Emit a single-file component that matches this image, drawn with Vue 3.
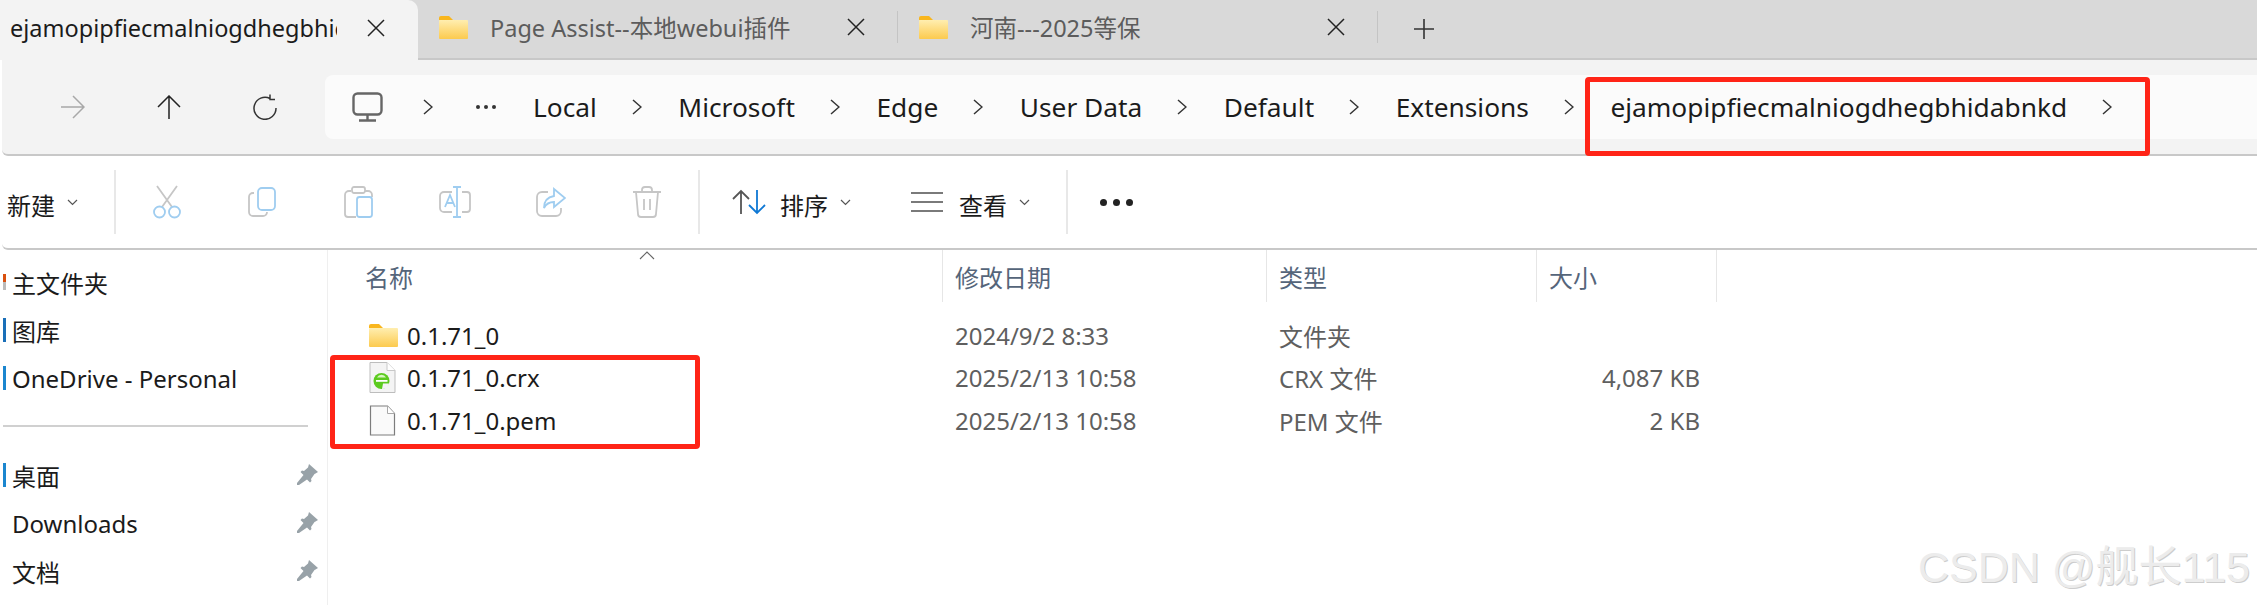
<script setup>
const crumbs = ['Local', 'Microsoft', 'Edge', 'User Data', 'Default', 'Extensions', 'ejamopipfiecmalniogdhegbhidabnkd']

const sidebarTop = [
  { label: '主文件夹', mark: 'orange' },
  { label: '图库', mark: 'blue' },
  { label: 'OneDrive - Personal', mark: 'sky' },
]
const sidebarPinned = [
  { label: '桌面', mark: 'sky' },
  { label: 'Downloads', mark: '' },
  { label: '文档', mark: '' },
]

const files = [
  { name: '0.1.71_0', icon: 'folder', date: '2024/9/2 8:33', type: '文件夹', size: '' },
  { name: '0.1.71_0.crx', icon: 'crx', date: '2025/2/13 10:58', type: 'CRX 文件', size: '4,087 KB' },
  { name: '0.1.71_0.pem', icon: 'blank', date: '2025/2/13 10:58', type: 'PEM 文件', size: '2 KB' },
]
</script>

<template>
  <div class="explorer">
    <!-- tabs -->
    <div class="tabs">
      <div class="tab tab--active">
        <span class="tab__title tab__title--clip">ejamopipfiecmalniogdhegbhidabnkd</span>
        <svg class="tab__close" width="18" height="18" viewBox="0 0 18 18"><path d="M1 1l16 16M17 1L1 17" stroke="#222" stroke-width="1.5" /></svg>
      </div>
      <div class="tab">
        <svg class="folder" width="29" height="23" viewBox="0 0 29 23">
          <path d="M0 2a2 2 0 0 1 2-2h8l4 4h-14z" fill="#f9b61d" />
          <rect y="4" width="29" height="19" rx="1" fill="url(#fg1)" />
          <defs><linearGradient id="fg1" x1="0" y1="0" x2="0" y2="1"><stop offset="0" stop-color="#ffeeb0" /><stop offset="1" stop-color="#fcca4e" /></linearGradient></defs>
        </svg>
        <span class="tab__title">Page Assist--本地webui插件</span>
        <svg class="tab__close" width="18" height="18" viewBox="0 0 18 18"><path d="M1 1l16 16M17 1L1 17" stroke="#222" stroke-width="1.5" /></svg>
      </div>
      <div class="tab">
        <svg class="folder" width="29" height="23" viewBox="0 0 29 23">
          <path d="M0 2a2 2 0 0 1 2-2h8l4 4h-14z" fill="#f9b61d" />
          <rect y="4" width="29" height="19" rx="1" fill="url(#fg1)" />
        </svg>
        <span class="tab__title">河南---2025等保</span>
        <svg class="tab__close" width="18" height="18" viewBox="0 0 18 18"><path d="M1 1l16 16M17 1L1 17" stroke="#222" stroke-width="1.5" /></svg>
      </div>
      <svg class="tab-plus" width="22" height="22" viewBox="0 0 22 22"><path d="M11 1v20M1 11h20" stroke="#333" stroke-width="1.6" /></svg>
    </div>

    <!-- address bar -->
    <div class="address">
      <div class="nav">
        <button class="nav__btn">
          <svg width="24" height="24" viewBox="0 0 24 24" fill="none" stroke="#a8a8a8" stroke-width="1.5"><path d="M0 12h23M12 1l11 11-11 11" /></svg>
        </button>
        <button class="nav__btn">
          <svg width="24" height="24" viewBox="0 0 24 24" fill="none" stroke="#222" stroke-width="1.5"><path d="M12 24V1M1 12L12 1l11 11" /></svg>
        </button>
        <button class="nav__btn">
          <svg width="24" height="26" viewBox="0 0 24 26" fill="none" stroke="#333" stroke-width="1.5"><path d="M17 4.500A11 11 0 1 0 23 14M17 .500v5h5" /></svg>
        </button>
      </div>
      <div class="crumbs">
        <svg class="crumbs__pc" width="31" height="30" viewBox="0 0 31 30" fill="none" stroke="#666" stroke-width="2.400"><rect x="1.500" y="1.500" width="28" height="21" rx="4" /><path d="M15.500 23v5M7 28.500h17" /></svg>
        <svg class="chev chev--first" width="10" height="16" viewBox="0 0 10 16" fill="none" stroke="#333" stroke-width="1.500"><path d="M1 1l8 7-8 7" /></svg>
        <span class="crumbs__more"><i></i><i></i><i></i></span>
        <template v-for="(crumb, i) in crumbs" :key="crumb">
          <span class="crumb">{{ crumb }}</span>
          <svg class="chev" width="10" height="16" viewBox="0 0 10 16" fill="none" stroke="#333" stroke-width="1.500"><path d="M1 1l8 7-8 7" /></svg>
        </template>
      </div>
    </div>

    <!-- command bar -->
    <div class="commands">
      <div class="cmd-new">
        <span class="cmd-label">新建</span>
        <svg class="small-chev" width="11" height="7" viewBox="0 0 11 7" fill="none" stroke="#555" stroke-width="1.200"><path d="M1 1l4.500 4.500L10 1" /></svg>
      </div>
      <i class="cmd-sep"></i>
      <button class="cmd-icon">
        <svg width="30" height="34" viewBox="0 0 30 34" fill="none" stroke-width="1.800">
          <path d="M5 1l15 21M25 1L10 22" stroke="#c6c6c6" />
          <circle cx="7.500" cy="27" r="5.500" stroke="#9fcdf0" />
          <circle cx="22.500" cy="27" r="5.500" stroke="#9fcdf0" />
        </svg>
      </button>
      <button class="cmd-icon">
        <svg width="30" height="30" viewBox="0 0 30 30" fill="none" stroke-width="1.800">
          <path d="M6 6h-1a4 4 0 0 0-4 4v15a4 4 0 0 0 4 4h10a4 4 0 0 0 4-4" stroke="#c6c6c6" />
          <rect x="10" y="1" width="17" height="22" rx="4" stroke="#9fcdf0" />
        </svg>
      </button>
      <button class="cmd-icon">
        <svg width="30" height="32" viewBox="0 0 30 32" fill="none" stroke-width="1.800">
          <path d="M7 5h-2a4 4 0 0 0-4 4v19a3 3 0 0 0 3 3h8M21 5h3a4 4 0 0 1 4 4v2" stroke="#c6c6c6" />
          <rect x="8" y="1" width="13" height="6" rx="2" stroke="#c6c6c6" />
          <rect x="13" y="11" width="15" height="20" rx="2.500" stroke="#9fcdf0" />
        </svg>
      </button>
      <button class="cmd-icon">
        <svg width="32" height="32" viewBox="0 0 32 32" fill="none" stroke-width="1.800">
          <path d="M13 6h-8a4 4 0 0 0-4 4v12a4 4 0 0 0 4 4h8M23 6h5a3 3 0 0 1 3 3v14a3 3 0 0 1-3 3h-5" stroke="#c6c6c6" />
          <path d="M14 1h8M18 1v30M14 31h8" stroke="#9fcdf0" />
          <path d="M6 21l5-12 5 12M8 17h6" stroke="#9fcdf0" />
        </svg>
      </button>
      <button class="cmd-icon">
        <svg width="30" height="30" viewBox="0 0 30 30" fill="none" stroke-width="1.800">
          <path d="M12 5h-6a5 5 0 0 0-5 5v14a5 5 0 0 0 5 5h14a5 5 0 0 0 5-5v-3" stroke="#c6c6c6" />
          <path d="M18 2l11 9-11 9v-5c-5 0-8 2-10 6 0-7 4-11 10-12z" stroke="#9fcdf0" />
        </svg>
      </button>
      <button class="cmd-icon">
        <svg width="30" height="32" viewBox="0 0 30 32" fill="none" stroke="#c6c6c6" stroke-width="1.800">
          <path d="M1 6h28M10 6V4a3 3 0 0 1 3-3h4a3 3 0 0 1 3 3v2M4 6l2 22a3 3 0 0 0 3 3h12a3 3 0 0 0 3-3l2-22M12 13v11M18 13v11" />
        </svg>
      </button>
      <i class="cmd-sep cmd-sep--b"></i>
      <div class="cmd-sort">
        <svg width="42" height="26" viewBox="0 0 42 26" fill="none" stroke-width="1.800">
          <path d="M9 25V2M1 10l8-8 8 8" stroke="#555" />
          <path d="M25 1v23M17 16l8 8 8-8" stroke="#0f78d4" />
        </svg>
        <span class="cmd-label">排序</span>
        <svg class="small-chev" width="11" height="7" viewBox="0 0 11 7" fill="none" stroke="#555" stroke-width="1.200"><path d="M1 1l4.500 4.500L10 1" /></svg>
      </div>
      <div class="cmd-view">
        <svg width="32" height="22" viewBox="0 0 32 22" fill="none" stroke="#7a7a7a" stroke-width="2.200"><path d="M0 2h32M0 11h32M0 20h32" /></svg>
        <span class="cmd-label">查看</span>
        <svg class="small-chev" width="11" height="7" viewBox="0 0 11 7" fill="none" stroke="#555" stroke-width="1.200"><path d="M1 1l4.500 4.500L10 1" /></svg>
      </div>
      <i class="cmd-sep cmd-sep--c"></i>
      <div class="cmd-dots"><i></i><i></i><i></i></div>
    </div>

    <div class="body">
      <!-- sidebar -->
      <aside class="side">
        <div v-for="item in sidebarTop" :key="item.label" class="side__row">
          <i class="side__mark" :class="item.mark"></i>
          <span>{{ item.label }}</span>
        </div>
        <div class="side__divider"></div>
        <div v-for="item in sidebarPinned" :key="item.label" class="side__row">
          <i class="side__mark" :class="item.mark"></i>
          <span>{{ item.label }}</span>
          <svg class="pin" width="22" height="22" viewBox="0 0 22 22" fill="#98a2a8">
            <path d="M13 0l9 8-2.500 1.500-1 .500-3.500 5 .5 2-1.500 1.500-3-3L3 21 1 21l0-2 6.500-8-3-3L6 6.500l2 .5 4-3.500z" />
          </svg>
        </div>
      </aside>

      <!-- file list -->
      <section class="list">
        <div class="list__head">
          <div class="col col--name">名称</div>
          <div class="col">修改日期</div>
          <div class="col">类型</div>
          <div class="col col--last">大小</div>
          <svg class="sort-caret" width="16" height="9" viewBox="0 0 16 9" fill="none" stroke="#666" stroke-width="1.100"><path d="M1 8l7-7 7 7" /></svg>
        </div>
        <div v-for="file in files" :key="file.name" class="row">
          <div class="row__name">
            <span class="row__icon">
              <svg v-if="file.icon === 'folder'" width="29" height="23" viewBox="0 0 29 23">
                <path d="M0 2a2 2 0 0 1 2-2h8l4 4h-14z" fill="#f9b61d" />
                <rect y="4" width="29" height="19" rx="1" fill="url(#fg1)" />
              </svg>
              <svg v-else-if="file.icon === 'crx'" width="27" height="31" viewBox="0 0 27 31">
                <path d="M1 .500h17l8 8v22h-25z" fill="#f4f4f4" stroke="#bdbdbd" />
                <path d="M18 .500v8h8" fill="#fff" stroke="#c8c8c8" />
                <circle cx="12.500" cy="19" r="8" fill="#5ccb1f" />
                <path d="M8 15.500a5 5 0 0 1 9 0z" fill="#d9f5c4" />
                <path d="M7 18h11.500v1.800h-11.500z" fill="#fff" />
                <path d="M14 21.500h6.500l-2.500 5-5 .5z" fill="#f4f4f4" />
              </svg>
              <svg v-else width="27" height="31" viewBox="0 0 27 31">
                <path d="M1.500 1h17l7 7.500v21.500h-24z" fill="#fafafa" stroke="#7d7d7d" stroke-width="1.200" />
                <path d="M18.500 1v7.500h7" fill="#fff" stroke="#a8a8a8" />
              </svg>
            </span>
            <span class="row__title">{{ file.name }}</span>
          </div>
          <div class="row__cell">{{ file.date }}</div>
          <div class="row__cell">{{ file.type }}</div>
          <div class="row__cell row__cell--size">{{ file.size }}</div>
        </div>
      </section>
    </div>

    <!-- red annotation boxes and watermark sit on top of the screenshot -->
    <div class="mark-box mark-box--path"></div>
    <div class="mark-box mark-box--files"></div>
    <div class="watermark">CSDN @舰长115</div>
  </div>
</template>

<style scoped>
.explorer {
  position: relative;
  width: 2257px;
  height: 605px;
  overflow: hidden;
  background: #fff;
  font-family: "Noto Sans", "Noto Sans CJK SC", sans-serif;
  color: #1b1b1b;
}

button {
  border: 0;
  padding: 0;
  background: none;
  display: flex;
  align-items: center;
  justify-content: center;
}

.tabs {
  display: flex;
  align-items: center;
  height: 60px;
  background: #d9d9d9;
  border-bottom: 2px solid #c8c8c8;
  box-sizing: border-box;
}
.tab {
  position: relative;
  display: flex;
  align-items: center;
  box-sizing: border-box;
  width: 480px;
  height: 58px;
  padding: 0 33px 4px 21px;
  color: #5c5c5c;
}
.tab::after {
  content: "";
  position: absolute;
  right: 0;
  top: 11px;
  bottom: 15px;
  width: 1px;
  background: #c4c4c4;
}
.tab--active {
  width: 418px;
  height: 60px;
  margin-bottom: -2px;
  padding-left: 10px;
  background: #f3f3f3;
  border-top-right-radius: 10px;
  color: #1b1b1b;
}
.tab--active::after {
  display: none;
}
.tab__title {
  flex: 1;
  margin-left: 22px;
  white-space: nowrap;
  font-size: 23.500px;
}
.tab__title--clip {
  flex: none;
  width: 327px;
  margin-left: 0;
  overflow: hidden;
}
.tab__close {
  flex: none;
  margin-left: auto;
}
.folder {
  flex: none;
}
.tab-plus {
  margin: 0 0 0 35px;
}

.address {
  display: flex;
  height: 96px;
  box-sizing: border-box;
  margin-left: 2px;
  padding-top: 15px;
  background: #f3f3f3;
  border-bottom: 2px solid #c8c8c8;
  border-bottom-left-radius: 6px;
}
.nav {
  display: flex;
  flex: none;
  width: 323px;
  height: 64px;
  padding-left: 23px;
  box-sizing: border-box;
}
.nav__btn {
  width: 96px;
  height: 64px;
}
.crumbs {
  display: flex;
  flex: 1;
  align-items: center;
  height: 64px;
  padding-left: 27px;
  background: #fbfbfb;
  border-radius: 8px 0 0 8px;
  font-size: 26.300px;
  white-space: nowrap;
}
.crumbs__pc {
  flex: none;
}
.chev {
  flex: none;
  margin: 0 36.500px 0 35px;
}
.chev--first {
  margin: 0 0 0 40px;
}
.crumbs__more {
  display: flex;
  gap: 4px;
  margin: 0 37px 0 43px;
}
.crumbs__more i {
  width: 4px;
  height: 4px;
  border-radius: 50%;
  background: #333;
}

.commands {
  display: flex;
  align-items: center;
  height: 94px;
  margin-left: 2px;
  box-sizing: border-box;
  border-bottom: 2px solid #c8c8c8;
  border-bottom-left-radius: 6px;
  font-size: 24px;
}
.cmd-label {
  position: relative;
  top: 2px;
  font-size: 24px;
}
.cmd-new {
  display: flex;
  align-items: center;
  width: 112px;
  padding-left: 5px;
  box-sizing: border-box;
}
.small-chev {
  margin-left: 12px;
}
.cmd-sep {
  flex: none;
  width: 2px;
  height: 64px;
  background: #e8e8e8;
}
.cmd-sep--b {
  margin-left: 3px;
}
.cmd-sep--c {
  margin-left: 36px;
}
.cmd-icon {
  flex: none;
  width: 96px;
  height: 64px;
}
.cmd-icon:first-of-type {
  margin-left: 3px;
}
.cmd-sort {
  display: flex;
  align-items: center;
  margin-left: 32px;
}
.cmd-sort .cmd-label {
  margin-left: 6px;
}
.cmd-view {
  display: flex;
  align-items: center;
  margin-left: 60px;
}
.cmd-view .cmd-label {
  margin-left: 16px;
}
.cmd-dots {
  display: flex;
  gap: 6px;
  margin-left: 32px;
}
.cmd-dots i {
  width: 7px;
  height: 7px;
  border-radius: 50%;
  background: #222;
}

.body {
  display: flex;
  height: 355px;
}
.side {
  flex: none;
  width: 328px;
  box-sizing: border-box;
  padding: 8px 9px 0 3px;
  border-right: 1px solid #efefef;
  font-size: 24px;
}
.side__row {
  display: flex;
  align-items: center;
  height: 48px;
}
.side__mark {
  flex: none;
  width: 3px;
  height: 24px;
  margin-right: 6px;
}
.side__mark.orange {
  background: linear-gradient(#fff 15%, #d9500f 15%, #d9500f 50%, #bbb 50%, #bbb 85%, #fff 85%);
}
.side__mark.blue {
  background: #1a6fb8;
}
.side__mark.sky {
  background: #1b86cf;
}
.side__divider {
  width: 305px;
  height: 2px;
  margin: 23px 0 24px;
  background: #d0d0d0;
}
.pin {
  margin-left: auto;
}

.list {
  position: relative;
  flex: 1;
  min-width: 0;
}
.list__head,
.row {
  display: grid;
  grid-template-columns: 614px 324px 270px 181px;
}
.list__head {
  position: relative;
  height: 52px;
  margin-bottom: 12px;
  color: #55657a;
  font-size: 24px;
}
.col {
  display: flex;
  align-items: center;
  padding-left: 12px;
  border-left: 1px solid #e6e6e6;
}
.col--name {
  padding-left: 37px;
  border-left: 0;
}
.col--last {
  border-right: 1px solid #e6e6e6;
}
.sort-caret {
  position: absolute;
  left: 311px;
  top: 1px;
}
.row {
  align-items: center;
  height: 42.500px;
  font-size: 24px;
  color: #5f5f5f;
}
.row__name {
  display: flex;
  align-items: center;
  padding-left: 41px;
  color: #1b1b1b;
}
.row__icon {
  display: flex;
  flex: none;
  width: 38px;
}
.row__cell {
  padding-left: 13px;
}
.row__cell--size {
  padding: 0 17px 0 0;
  text-align: right;
}

.mark-box {
  position: absolute;
  box-sizing: border-box;
  border: 5px solid #ff2417;
  border-radius: 4px;
}
.mark-box--path {
  left: 1585px;
  top: 77px;
  width: 565px;
  height: 79px;
}
.mark-box--files {
  left: 330px;
  top: 355px;
  width: 370px;
  height: 94px;
}
.watermark {
  position: absolute;
  left: 1918px;
  top: 542px;
  font-family: "Liberation Sans", "Noto Sans CJK SC", sans-serif;
  font-size: 43px;
  line-height: 50px;
  white-space: nowrap;
  color: #ececec;
  text-shadow: 1px 1px 0 #cdcdcd;
}
</style>

<style>
html,
body {
  margin: 0;
  background: #fff;
  overflow: hidden;
}
</style>
